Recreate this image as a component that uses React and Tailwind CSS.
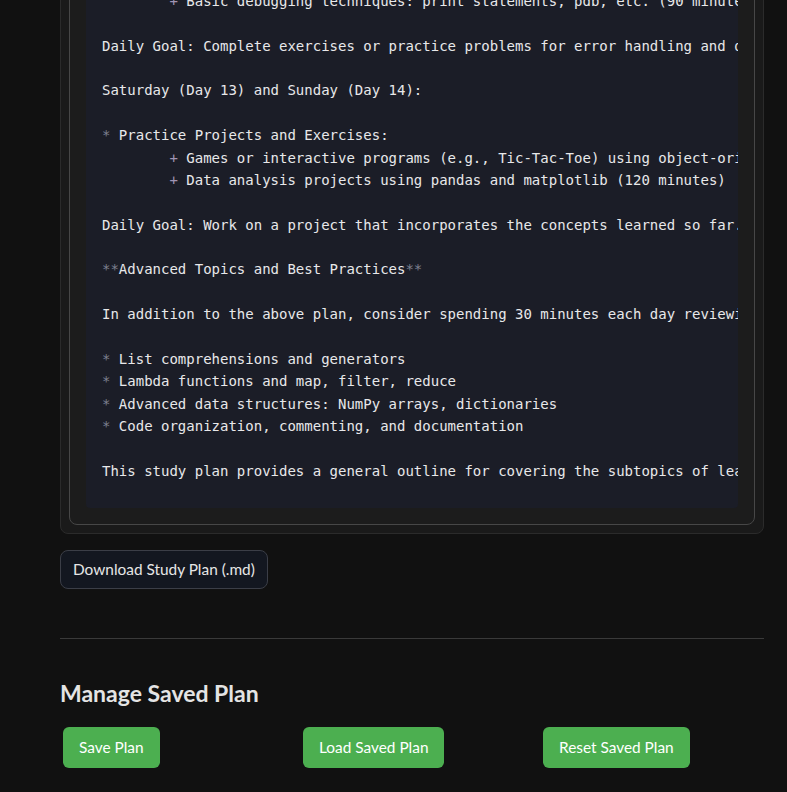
import React from 'react';

const MONO = '"DejaVu Sans Mono", "Liberation Mono", monospace';
const SANS = 'Lato, "Noto Sans", sans-serif';

// each line: [indent, marker, text]; marker is dimmed syntax
const lines = [
  ['', '* ', 'Error Handling and Debugging:'],
  ['\t', '+ ', 'Try-except blocks, raising and catching exceptions (60 minutes)'],
  ['\t', '+ ', 'Basic debugging techniques: print statements, pdb, etc. (90 minutes)'],
  ['', '', ''],
  ['', '', 'Daily Goal: Complete exercises or practice problems for error handling and debugging.'],
  ['', '', ''],
  ['', '', 'Saturday (Day 13) and Sunday (Day 14):'],
  ['', '', ''],
  ['', '* ', 'Practice Projects and Exercises:'],
  ['\t', '+ ', 'Games or interactive programs (e.g., Tic-Tac-Toe) using object-oriented programming (120 minutes)'],
  ['\t', '+ ', 'Data analysis projects using pandas and matplotlib (120 minutes)'],
  ['', '', ''],
  ['', '', 'Daily Goal: Work on a project that incorporates the concepts learned so far.'],
  ['', '', ''],
  ['', 'bold', 'Advanced Topics and Best Practices'],
  ['', '', ''],
  ['', '', 'In addition to the above plan, consider spending 30 minutes each day reviewing the following topics:'],
  ['', '', ''],
  ['', '* ', 'List comprehensions and generators'],
  ['', '* ', 'Lambda functions and map, filter, reduce'],
  ['', '* ', 'Advanced data structures: NumPy arrays, dictionaries'],
  ['', '* ', 'Code organization, commenting, and documentation'],
  ['', '', ''],
  ['', '', 'This study plan provides a general outline for covering the subtopics of learning Python in two weeks.'],
];

function CodeLine({ indent, marker, text }) {
  if (marker === 'bold') {
    return (
      <div className="h-[22.4px]">
        <span className="text-[#7d8090]">**</span>
        {text}
        <span className="text-[#7d8090]">**</span>
      </div>
    );
  }
  return (
    <div className="h-[22.4px]">
      {indent}
      {marker && (
        <span className={marker === '+ ' ? 'text-[#a094b4]' : 'text-[#7d8090]'}>{marker}</span>
      )}
      {text}
    </div>
  );
}

export default function App() {
  return (
    <div className="min-h-screen overflow-hidden bg-[#111111] pb-6" style={{ fontFamily: SANS }}>
      <div className="ml-[60px] w-[704px]">
        <div className="-mt-[97px] rounded-lg border border-[#2b2b2b] bg-[#1a1a1a] p-2">
          <div className="rounded-lg border border-[#474747] bg-[#1c1c1c] p-4">
            <div className="overflow-hidden rounded bg-[#1b1d27] px-4 pt-4 pb-[26px]">
              <pre
                className="whitespace-pre text-[14px] leading-[22.4px] text-[#e8e8ea]"
                style={{ fontFamily: MONO, tabSize: 8 }}
              >
                {lines.map(([indent, marker, text], i) => (
                  <CodeLine key={i} indent={indent} marker={marker} text={text} />
                ))}
              </pre>
            </div>
          </div>
        </div>

        <button className="mt-4 h-[39px] rounded-lg border border-[#3b3e47] bg-[#131720] px-3 text-[15.4px] text-[#e6e6e6]">
          Download Study Plan (.md)
        </button>

        <div className="mt-[49px] border-t border-[#3a3a3a]" />

        <h3 className="mt-[39px] text-[23px] leading-[30px] font-bold text-[#e4e4e4]">Manage Saved Plan</h3>

        <div className="mt-[19px] grid grid-cols-3 gap-4">
          <div>
            <button className="ml-[3px] h-[41px] rounded-md bg-[#4caf50] px-4 text-[15.4px] text-white">Save Plan</button>
          </div>
          <div>
            <button className="ml-[3px] h-[41px] rounded-md bg-[#4caf50] px-4 text-[15.4px] text-white">Load Saved Plan</button>
          </div>
          <div>
            <button className="ml-[3px] h-[41px] rounded-md bg-[#4caf50] px-4 text-[15.4px] text-white">Reset Saved Plan</button>
          </div>
        </div>
      </div>
    </div>
  );
}
